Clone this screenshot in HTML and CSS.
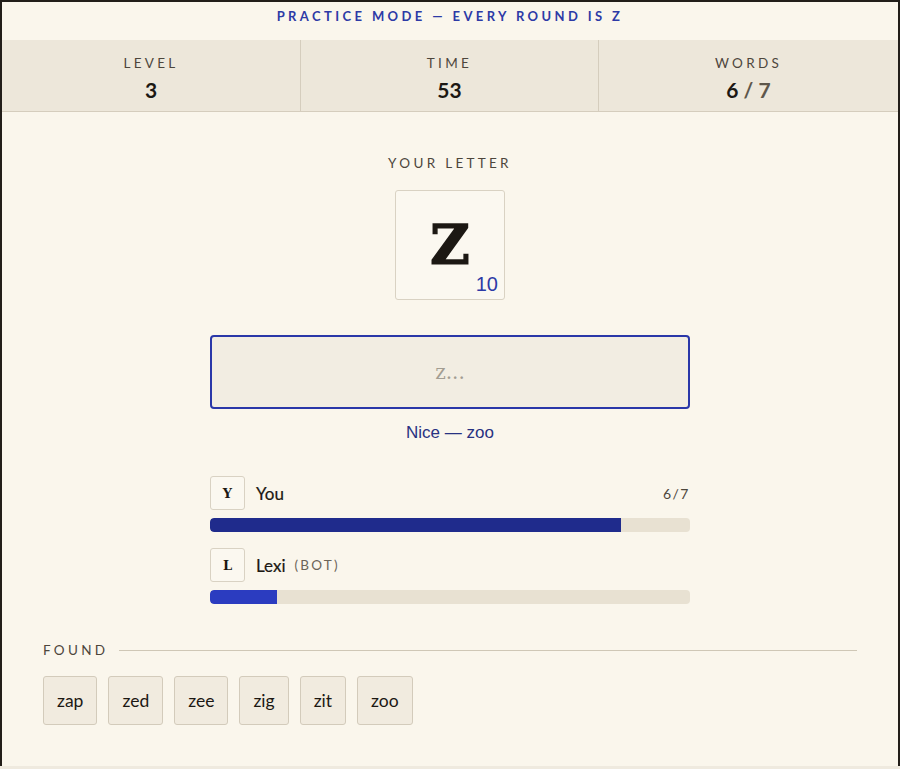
FILE: index.html
```html
<!DOCTYPE html>
<html lang="en">
<head>
<meta charset="utf-8">
<title>Practice Mode</title>
<link rel="stylesheet" href="styles.css">
</head>
<body>
<div class="frame">
  <div class="banner">PRACTICE MODE — EVERY ROUND IS Z</div>
  <div class="stats">
    <div class="stat"><div class="stat-label">LEVEL</div><div class="stat-value">3</div></div>
    <div class="stat"><div class="stat-label">TIME</div><div class="stat-value">53</div></div>
    <div class="stat"><div class="stat-label">WORDS</div><div class="stat-value">6 <span class="muted">/ 7</span></div></div>
  </div>
  <main class="play">
    <div class="caps">YOUR LETTER</div>
    <div class="tile">
      <span class="tile-letter">Z</span>
      <span class="tile-score">10</span>
    </div>
    <div class="entry">z...</div>
    <div class="feedback">Nice — zoo</div>
    <div class="players">
      <div class="player">
        <div class="player-head">
          <span class="avatar">Y</span>
          <span class="name">You</span>
          <span class="count">6/7</span>
        </div>
        <div class="track"><div class="fill fill-you" style="width:85.7%"></div></div>
      </div>
      <div class="player">
        <div class="player-head">
          <span class="avatar">L</span>
          <span class="name">Lexi</span>
          <span class="bot">(BOT)</span>
        </div>
        <div class="track"><div class="fill fill-bot" style="width:14%"></div></div>
      </div>
    </div>
  </main>
  <section class="found">
    <div class="found-head"><span class="caps">FOUND</span><span class="rule"></span></div>
    <div class="chips">
      <span class="chip">zap</span>
      <span class="chip">zed</span>
      <span class="chip">zee</span>
      <span class="chip">zig</span>
      <span class="chip">zit</span>
      <span class="chip">zoo</span>
    </div>
  </section>
</div>
</body>
</html>
```

FILE: styles.css
```css
* { box-sizing: border-box; }
html, body { margin: 0; padding: 0; }
body {
  background: #efeadf;
  font-family: "Lato", "Liberation Sans", sans-serif;
  color: #1c1813;
}
.frame {
  height: 766px;
  border: 2px solid #221e19;
  border-bottom: none;
  background: #faf6ec;
  display: flex;
  flex-direction: column;
}
.banner {
  padding: 6px 0 16px;
  line-height: 16px;
  font-size: 13px;
  font-weight: 700;
  letter-spacing: 3.4px;
  color: #2d3aa6;
  text-align: center;
}
.stats {
  display: grid;
  grid-template-columns: 298px 298px 1fr;
  background: #ede7da;
  border-bottom: 1px solid #d5cdbd;
}
.stat {
  padding: 15px 0 9px;
  text-align: center;
  display: flex;
  flex-direction: column;
  gap: 7px;
}
.stat + .stat { border-left: 1px solid #d5cdbd; }
.stat-label {
  font-size: 13.5px;
  line-height: 16px;
  letter-spacing: 3.3px;
  color: #4d463c;
}
.stat-value {
  font-size: 21px;
  line-height: 24px;
  font-weight: 700;
  color: #1c1813;
}
.muted { color: #5e574b; }
.play {
  display: flex;
  flex-direction: column;
  align-items: center;
  padding-top: 43px;
}
.caps {
  font-size: 13.5px;
  line-height: 16px;
  letter-spacing: 3.3px;
  color: #4d463c;
}
.tile {
  position: relative;
  margin-top: 19px;
  width: 110px;
  height: 110px;
  border: 1px solid #d9d2c3;
  border-radius: 3px;
  background: #fbf8f0;
  display: flex;
  align-items: center;
  justify-content: center;
}
.tile-letter {
  font-family: "DejaVu Serif", "Liberation Serif", serif;
  font-weight: 700;
  font-size: 54px;
  line-height: 1;
  color: #1c1813;
  -webkit-text-stroke: 1.5px #1c1813;
}
.tile-score {
  position: absolute;
  right: 6px;
  bottom: 5px;
  font-family: "Liberation Sans", sans-serif;
  font-size: 20px;
  line-height: 20px;
  color: #2d3aa6;
}
.entry {
  margin-top: 35px;
  width: 480px;
  height: 74px;
  border: 2px solid #2a37a8;
  border-radius: 4px;
  background: #f2ede2;
  display: flex;
  align-items: center;
  justify-content: center;
  font-family: "DejaVu Serif", serif;
  font-size: 20px;
  color: #a39d92;
}
.feedback {
  margin-top: 14px;
  font-family: "Liberation Sans", sans-serif;
  font-size: 17px;
  line-height: 20px;
  color: #283282;
}
.players {
  margin-top: 33px;
  width: 480px;
  display: flex;
  flex-direction: column;
  gap: 16px;
}
.player {
  display: flex;
  flex-direction: column;
  gap: 8px;
}
.player-head {
  display: flex;
  align-items: center;
  height: 34px;
}
.avatar {
  width: 35px;
  height: 34px;
  border: 1px solid #d9d2c3;
  border-radius: 3px;
  background: #fbf8f0;
  display: flex;
  align-items: center;
  justify-content: center;
  font-family: "DejaVu Serif", serif;
  font-weight: 700;
  font-size: 13px;
  color: #1c1813;
}
.name {
  margin-left: 11px;
  font-size: 17px;
  color: #1c1813;
  -webkit-text-stroke: 0.2px #1c1813;
}
.count {
  margin-left: auto;
  font-size: 14px;
  letter-spacing: 1.5px;
  color: #4d463c;
}
.bot {
  margin-left: 9px;
  font-size: 13.5px;
  letter-spacing: 2.2px;
  color: #6b6458;
}
.track {
  height: 14px;
  border-radius: 4px;
  background: #e8e1d2;
  overflow: hidden;
}
.fill { height: 100%; border-radius: 4px 0 0 4px; }
.fill-you { background: #1f2b8c; }
.fill-bot { background: #2b3cc0; }
.found {
  margin-top: 38px;
  padding: 0 41px 0 41px;
}
.found-head {
  display: flex;
  align-items: center;
  gap: 11px;
}
.rule {
  flex: 1;
  height: 1px;
  background: #cfc7b6;
}
.chips {
  margin-top: 18px;
  display: flex;
  gap: 11px;
}
.chip {
  height: 49px;
  padding: 0 13px;
  display: flex;
  align-items: center;
  border: 1px solid #d3cbbb;
  border-radius: 3px;
  background: #f1ebdf;
  font-size: 17.5px;
  color: #1c1813;
}
```
